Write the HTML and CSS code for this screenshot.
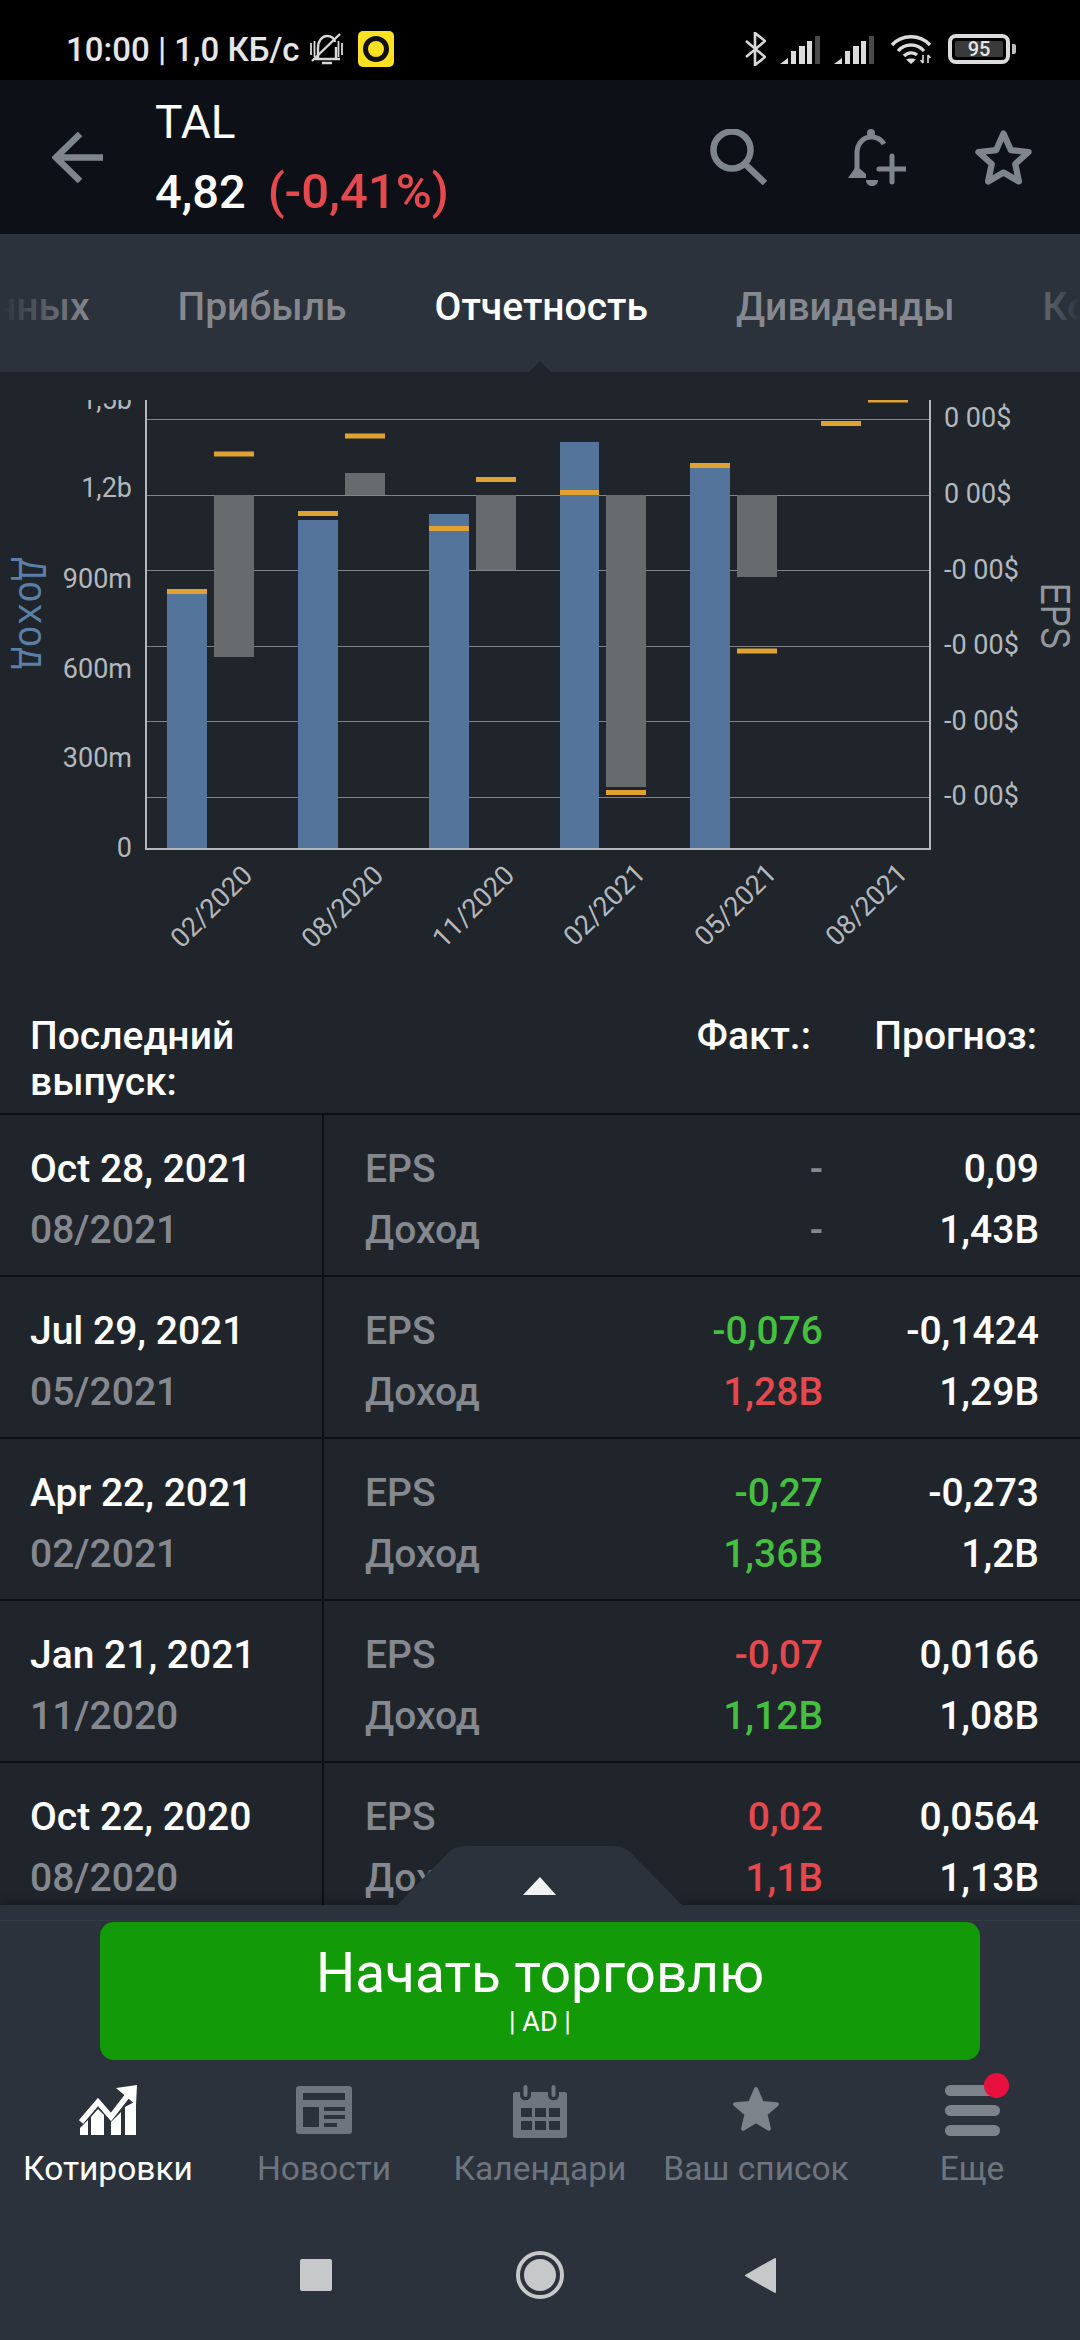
FILE: index.html
```html
<!DOCTYPE html>
<html lang="ru">
  <head>
    <meta charset="UTF-8" />
    <meta name="viewport" content="width=device-width, initial-scale=1.0" />
    <title>TAL</title>
    <link rel="stylesheet" href="styles.css">
  </head>
  <body>
    <div class="screen">
      <div class="status">
        <span class="status-text">10:00 | 1,0 КБ/с</span>
        <svg class="ic-mute" viewBox="0 0 35 33" fill="none" stroke="#d8d8d8" stroke-width="2.400">
          <path d="M9 25V15C9 8 13 3 18 3C22 3 25 5 26 9M27 14V25M6 26H31M13 30H23" />
          <path d="M3 28L31 1" />
          <path d="M2 10V22M5.500 8V24M29.500 8V24M33 10V22" stroke-width="1.800" />
        </svg>
        <span class="app-badge"><i></i></span>
        <span class="grow"></span>
        <svg class="ic-bt" viewBox="0 0 21 34" fill="none" stroke="#d8d8d8" stroke-width="2.6">
          <path d="M1 9L20 25L10 33V1L20 9L1 25" />
        </svg>
        <svg class="ic-signal" viewBox="0 0 40 29">
          <path fill="#dcdcdc" d="M0 29L8 23V29ZM11 16H16V29H11ZM19 11H25V29H19ZM27 6H32V29H27Z" />
          <rect fill="#4a4a4a" x="35" y="1" width="5" height="28" />
        </svg>
        <svg class="ic-signal" viewBox="0 0 40 29">
          <path fill="#dcdcdc" d="M0 29L8 23V29ZM11 16H16V29H11ZM19 11H25V29H19ZM27 6H32V29H27Z" />
          <rect fill="#4a4a4a" x="35" y="1" width="5" height="28" />
        </svg>
        <svg class="ic-wifi" viewBox="0 0 42 30" fill="none" stroke="#dcdcdc" stroke-width="3.4">
          <path d="M2 11C12 0 30 0 40 11" />
          <path d="M8 17C15 9 27 9 34 17" />
          <path d="M14 22C18 18 24 18 27 21" />
          <path fill="#dcdcdc" stroke="none" d="M21 30L16 25.500C18 24 24 24 26 25.500Z" />
          <path stroke-width="1.6" d="M33 21V29M30.500 26L33 29M38 21V29M38 21L40.500 24" />
        </svg>
        <span class="battery"><b>95</b></span>
        <span class="battery-nub"></span>
      </div>

      <div class="header">
        <svg class="ic-back" viewBox="0 0 51 51" fill="none" stroke="#7f858c" stroke-width="6.500">
          <path d="M51 25.500H4M28 2L4 25.500L28 49" />
        </svg>
        <div class="title">
          <div class="ticker">TAL</div>
          <div class="price">4,82<span class="red change">(-0,41%)</span></div>
        </div>
        <span class="grow"></span>
        <svg class="ic-search" viewBox="0 0 57 56" fill="none" stroke="#7f858c" stroke-width="6.500">
          <circle cx="22" cy="21" r="18.500" />
          <path d="M35 35L55 54" />
        </svg>
        <svg class="ic-bell" viewBox="0 0 58 58" fill="none" stroke="#7f858c" stroke-width="5">
          <circle cx="23" cy="5" r="4" fill="#7f858c" stroke="none" />
          <path d="M9 42V25C9 15 16 9 23 9C29 9 33 11 36 16" />
          <path fill="#7f858c" stroke="none" d="M0 50L7 40H11L18 46V50Z" />
          <path fill="#7f858c" stroke="none" d="M18 52H30C30 60 18 60 18 52Z" />
          <path d="M31 41H58M44 28V54" stroke-linecap="round" />
        </svg>
        <svg class="ic-star" viewBox="0 0 50 48" fill="none" stroke="#7f858c" stroke-width="5.500" stroke-linejoin="round">
          <path d="M25 3L31.400 17.500L47 19.200L35.300 29.700L38.500 45L25 37.200L11.500 45L14.700 29.700L3 19.200L18.600 17.500Z" />
        </svg>
      </div>

      <div class="tabs">
        <span class="tab tab-cut">нных</span>
        <span class="tab">Прибыль</span>
        <span class="tab active">Отчетность</span>
        <span class="tab">Дивиденды</span>
        <span class="tab">Ко</span>
        <span class="fade fade-left"></span>
        <span class="fade fade-right"></span>
        <span class="tab-arrow"></span>
      </div>

      <div class="main">
        <svg class="chart" viewBox="0 372 1080 620">
          <defs>
            <clipPath id="plot"><rect x="0" y="400" width="1080" height="592" /></clipPath>
          </defs>
          <g clip-path="url(#plot)">
            <g class="grid">
              <line x1="145" x2="930" y1="419.500" y2="419.500" />
              <line x1="145" x2="930" y1="495.500" y2="495.500" />
              <line x1="145" x2="930" y1="570.500" y2="570.500" />
              <line x1="145" x2="930" y1="646.500" y2="646.500" />
              <line x1="145" x2="930" y1="721.500" y2="721.500" />
              <line x1="145" x2="930" y1="797.500" y2="797.500" />
            </g>
            <g class="bar-blue">
              <rect x="167" y="590" width="40" height="259" />
              <rect x="298" y="520" width="40" height="329" />
              <rect x="429" y="514" width="40" height="335" />
              <rect x="560" y="442" width="39" height="407" />
              <rect x="690" y="466" width="40" height="383" />
            </g>
            <g class="bar-grey">
              <rect x="214" y="495" width="40" height="162" />
              <rect x="345" y="473" width="40" height="22" />
              <rect x="476" y="495" width="40" height="75" />
              <rect x="606" y="495" width="40" height="292" />
              <rect x="737" y="495" width="40" height="82" />
            </g>
            <g class="marker">
              <rect x="167" y="589" width="40" height="5" />
              <rect x="214" y="451.500" width="40" height="5" />
              <rect x="298" y="511" width="40" height="5" />
              <rect x="345" y="433.500" width="40" height="5" />
              <rect x="429" y="526" width="40" height="5" />
              <rect x="476" y="477" width="40" height="5" />
              <rect x="560" y="490" width="39" height="5" />
              <rect x="606" y="790" width="40" height="5" />
              <rect x="690" y="463" width="40" height="5" />
              <rect x="737" y="648.500" width="40" height="5" />
              <rect x="821" y="421" width="40" height="5" />
              <rect x="868" y="399" width="40" height="3.500" />
            </g>
            <g class="axis">
              <line x1="146" x2="146" y1="400" y2="850" />
              <line x1="930" x2="930" y1="400" y2="850" />
              <line x1="145" x2="931" y1="849" y2="849" />
            </g>
            <g class="tick tick-left">
              <text x="132" y="409">1,5b</text>
              <text x="132" y="497">1,2b</text>
              <text x="132" y="588">900m</text>
              <text x="132" y="678">600m</text>
              <text x="132" y="767">300m</text>
              <text x="132" y="857">0</text>
            </g>
            <g class="tick">
              <text x="944" y="427">0 00$</text>
              <text x="944" y="503">0 00$</text>
              <text x="944" y="579">-0 00$</text>
              <text x="944" y="654">-0 00$</text>
              <text x="944" y="730">-0 00$</text>
              <text x="944" y="805">-0 00$</text>
            </g>
            <g class="tick tick-x">
              <text x="254" y="877" transform="rotate(-45 254 877)">02/2020</text>
              <text x="385" y="877" transform="rotate(-45 385 877)">08/2020</text>
              <text x="516" y="877" transform="rotate(-45 516 877)">11/2020</text>
              <text x="647" y="875" transform="rotate(-45 647 875)">02/2021</text>
              <text x="778" y="875" transform="rotate(-45 778 875)">05/2021</text>
              <text x="909" y="875" transform="rotate(-45 909 875)">08/2021</text>
            </g>
            <text class="axis-title-left" x="0" y="0" transform="translate(19 558) rotate(90)" textLength="112" lengthAdjust="spacingAndGlyphs">Доход</text>
            <text class="axis-title-right" x="0" y="0" transform="translate(1041 583) rotate(90)" textLength="66" lengthAdjust="spacingAndGlyphs">EPS</text>
          </g>
        </svg>

        <div class="list-head">
          <div class="head-first">Последний<br />выпуск:</div>
          <div class="head-fact">Факт.:</div>
          <div class="head-fc">Прогноз:</div>
        </div>

        <div class="row">
          <div class="date"><div>Oct 28, 2021</div><div class="grey">08/2021</div></div>
          <div class="vals">
            <span class="grey">EPS</span><span class="num grey">-</span><span class="num">0,09</span>
            <span class="grey">Доход</span><span class="num grey">-</span><span class="num">1,43B</span>
          </div>
        </div>
        <div class="row">
          <div class="date"><div>Jul 29, 2021</div><div class="grey">05/2021</div></div>
          <div class="vals">
            <span class="grey">EPS</span><span class="num green">-0,076</span><span class="num">-0,1424</span>
            <span class="grey">Доход</span><span class="num red">1,28B</span><span class="num">1,29B</span>
          </div>
        </div>
        <div class="row">
          <div class="date"><div>Apr 22, 2021</div><div class="grey">02/2021</div></div>
          <div class="vals">
            <span class="grey">EPS</span><span class="num green">-0,27</span><span class="num">-0,273</span>
            <span class="grey">Доход</span><span class="num green">1,36B</span><span class="num">1,2B</span>
          </div>
        </div>
        <div class="row">
          <div class="date"><div>Jan 21, 2021</div><div class="grey">11/2020</div></div>
          <div class="vals">
            <span class="grey">EPS</span><span class="num red">-0,07</span><span class="num">0,0166</span>
            <span class="grey">Доход</span><span class="num green">1,12B</span><span class="num">1,08B</span>
          </div>
        </div>
        <div class="row">
          <div class="date"><div>Oct 22, 2020</div><div class="grey">08/2020</div></div>
          <div class="vals">
            <span class="grey">EPS</span><span class="num red">0,02</span><span class="num">0,0564</span>
            <span class="grey">Доход</span><span class="num red">1,1B</span><span class="num">1,13B</span>
          </div>
        </div>
      </div>

      <div class="dock">
        <svg class="pull" viewBox="0 0 285 59">
          <path fill="#2b323b" d="M0 59L48 10C54 3 60 0 70 0H215C225 0 231 3 237 10L285 59Z" />
          <path fill="#f2f2f2" d="M143 31L159 49H126Z" />
        </svg>
        <div class="ad-line">
          <div class="ad">
            <div class="ad-main">Начать торговлю</div>
            <div class="ad-sub">| AD |</div>
          </div>
        </div>
        <div class="nav">
          <div class="nav-item active">
            <svg class="nav-ic" viewBox="0 0 58 54" width="58" height="54" fill="#fff">
              <path d="M1 51V44L9 36V51ZM12 51V33L19 25L25 31V51ZM32 51V38L42 28V51ZM46 51V23L57 17V51Z" />
              <path d="M2 38L19 18L32 33L49 11" fill="none" stroke="#fff" stroke-width="5.500" />
              <path d="M37 4L58 1L57 21Z" />
            </svg>
            <span>Котировки</span>
          </div>
          <div class="nav-item">
            <svg class="nav-ic" viewBox="0 0 56 54" width="56" height="54">
              <path fill="#6f757e" fill-rule="evenodd" d="M3 2H53Q56 2 56 5V47Q56 50 53 50H3Q0 50 0 47V5Q0 2 3 2ZM7 9V16H49V9ZM7 23V43H23V23ZM28 23V27H49V23ZM28 31V35H49V31ZM28 39V43H41V39Z" />
            </svg>
            <span>Новости</span>
          </div>
          <div class="nav-item">
            <svg class="nav-ic" viewBox="0 0 54 54" width="54" height="54">
              <path fill="#6f757e" fill-rule="evenodd" d="M2 8H7V11C7 18 18 18 18 11V8H35V11C35 18 46 18 46 11V8H52Q54 8 54 10V52Q54 54 52 54H2Q0 54 0 52V10Q0 8 2 8ZM8 24V33H19V24ZM22 24V33H33V24ZM36 24V33H47V24ZM8 37V46H19V37ZM22 37V46H33V37ZM36 37V46H47V37Z" />
              <path fill="none" stroke="#6f757e" stroke-width="4" stroke-linecap="round" d="M12.500 3V11M40.500 3V11" />
            </svg>
            <span>Календари</span>
          </div>
          <div class="nav-item">
            <svg class="nav-ic" viewBox="0 0 50 54" width="50" height="54">
              <path fill="#7d838a" stroke="#7d838a" stroke-width="4" stroke-linejoin="round" d="M25 5L30.900 18.900L45.900 20.200L34.500 30.100L37.900 44.800L25 37L12.100 44.800L15.500 30.100L4.100 20.200L19.100 18.900Z" />
            </svg>
            <span>Ваш список</span>
          </div>
          <div class="nav-item">
            <div class="menu-ic">
              <i></i><i></i><i></i>
              <b class="dot"></b>
            </div>
            <span>Еще</span>
          </div>
        </div>
        <div class="sysnav">
          <span class="sys-square"></span>
          <span class="sys-circle"><i></i></span>
          <svg class="sys-back" viewBox="0 0 31 35">
            <path fill="#c6c8ca" stroke="#c6c8ca" stroke-width="2" stroke-linejoin="round" d="M30 1V34L1 17.500Z" />
          </svg>
        </div>
      </div>
    </div>
  </body>
</html>
```

FILE: styles.css
```css
* {
  padding: 0;
  margin: 0;
  box-sizing: border-box;
}
html,
body {
  background: #000;
}
body {
  font-family: Roboto, "Noto Sans", sans-serif;
  color: #fff;
}
svg {
  display: block;
  flex-shrink: 0;
}
.screen {
  width: 1080px;
  height: 2340px;
  display: flex;
  flex-direction: column;
  overflow: hidden;
  position: relative;
}
.grow {
  flex: 1;
}
.red {
  color: #e5484d;
}
.green {
  color: #45bf3f;
}
.grey {
  color: #85898f;
}

/* status bar */
.status {
  height: 80px;
  background: #000;
  display: flex;
  align-items: center;
  padding-left: 66px;
  padding-top: 18px;
  flex-shrink: 0;
}
.status-text {
  font-size: 33px;
  font-weight: 500;
  color: #e6e6e6;
  white-space: nowrap;
}
.ic-mute {
  width: 35px;
  height: 33px;
  margin-left: 9px;
}
.app-badge {
  width: 36px;
  height: 36px;
  margin-left: 14px;
  background: #fce022;
  border-radius: 5px;
  display: flex;
  align-items: center;
  justify-content: center;
}
.app-badge i {
  width: 26px;
  height: 26px;
  border: 5px solid #111;
  border-radius: 50%;
}
.ic-bt {
  width: 21px;
  height: 34px;
}
.ic-signal {
  width: 40px;
  height: 29px;
  margin-left: 14px;
}
.ic-wifi {
  width: 42px;
  height: 30px;
  margin-left: 16px;
}
.battery {
  width: 62px;
  height: 30px;
  margin-left: 16px;
  border: 4px solid #dcdcdc;
  border-radius: 8px;
  display: flex;
  align-items: center;
  justify-content: center;
  padding: 3px;
}
.battery b {
  flex: 1;
  height: 100%;
  background: #3a3a3a;
  border-radius: 2px;
  font-size: 20px;
  font-weight: 500;
  line-height: 16px;
  text-align: center;
  color: #e6e6e6;
}
.battery-nub {
  width: 4px;
  height: 10px;
  margin-left: 2px;
  margin-right: 64px;
  background: #bdbdbd;
  border-radius: 0 2px 2px 0;
}

/* header */
.header {
  height: 154px;
  background: #0d1117;
  display: flex;
  align-items: center;
  padding-left: 52px;
  padding-right: 48px;
  flex-shrink: 0;
}
.ic-back {
  width: 51px;
  height: 51px;
}
.title {
  margin-left: 52px;
}
.ticker {
  font-size: 46px;
  line-height: 70px;
}
.price {
  font-size: 47px;
  line-height: 70px;
  font-weight: 500;
  white-space: pre;
}
.change {
  font-size: 49px;
  margin-left: 22px;
}
.ic-search {
  width: 57px;
  height: 56px;
}
.ic-bell {
  width: 58px;
  height: 58px;
  margin-left: 81px;
}
.ic-star {
  width: 57px;
  height: 55px;
  margin-left: 69px;
}

/* tabs */
.tabs {
  height: 138px;
  background: #2b323b;
  display: flex;
  align-items: center;
  gap: 88px;
  padding-top: 8px;
  overflow: hidden;
  position: relative;
  flex-shrink: 0;
}
.tab {
  font-size: 39px;
  font-weight: 500;
  color: #85898f;
  white-space: nowrap;
}
.tab-cut {
  margin-left: -6px;
}
.tab.active {
  color: #fff;
}
.fade {
  position: absolute;
  top: 0;
  bottom: 0;
  width: 90px;
}
.fade-left {
  left: 0;
  background: linear-gradient(to right, #2b323b, rgba(43, 50, 59, 0));
}
.fade-right {
  right: 0;
  width: 60px;
  background: linear-gradient(to left, #2b323b, rgba(43, 50, 59, 0));
}
.tab-arrow {
  position: absolute;
  left: 529px;
  bottom: 0;
  border-left: 11px solid transparent;
  border-right: 11px solid transparent;
  border-bottom: 11px solid #1f252b;
}

/* chart */
.main {
  flex: 1;
  min-height: 0;
  background: #1f252b;
  overflow: hidden;
}
.chart {
  width: 1080px;
  height: 620px;
}
.grid line {
  stroke: #7f858b;
  stroke-width: 1;
}
.axis line {
  stroke: #b3b8be;
  stroke-width: 2;
}
.bar-blue rect {
  fill: #54749b;
}
.bar-grey rect {
  fill: #686b6e;
}
.marker rect {
  fill: #e0a331;
}
.tick text {
  font-family: Roboto, sans-serif;
  font-size: 27px;
  fill: #b4b8bd;
}
.tick-left text,
.tick-x text {
  text-anchor: end;
}
.axis-title-left {
  font-family: "Liberation Mono", monospace;
  font-size: 40px;
  fill: #5c7fa8;
}
.axis-title-right {
  font-family: "Liberation Sans", sans-serif;
  font-size: 42px;
  fill: #92979c;
}

/* table */
.list-head {
  display: grid;
  grid-template-columns: 1fr 200px 226px;
  padding: 21px 43px 8px 30px;
  font-size: 39px;
  font-weight: 500;
  line-height: 46px;
  border-bottom: 2px solid #0e1013;
}
.head-fact {
  text-align: right;
  white-space: nowrap;
}
.head-fc {
  text-align: right;
  white-space: nowrap;
}
.row {
  display: grid;
  grid-template-columns: 324px 1fr;
  height: 162px;
  border-bottom: 2px solid #0e1013;
  font-size: 39px;
  font-weight: 500;
  line-height: 61px;
}
.date {
  padding: 24px 0 0 30px;
  border-right: 2px solid #0e1013;
}
.vals {
  display: grid;
  grid-template-columns: 1fr 170px 216px;
  grid-auto-rows: 61px;
  padding: 24px 41px 0 41px;
}
.num {
  text-align: right;
}

/* bottom dock */
.dock {
  height: 435px;
  padding-top: 15px;
  background: #2b323b;
  position: relative;
  flex-shrink: 0;
  box-shadow: 0 -3px 8px rgba(0, 0, 0, 0.25);
}
.pull {
  position: absolute;
  left: 397px;
  top: -59px;
  width: 285px;
  height: 59px;
}
.ad-line {
  padding-top: 1px;
  border-top: 1px solid #343b45;
}
.ad {
  width: 880px;
  height: 138px;
  margin: 0 auto;
  background: #129a09;
  border-radius: 14px;
  text-align: center;
  padding-top: 19px;
}
.ad-main {
  font-size: 55px;
  line-height: 64px;
}
.ad-sub {
  font-size: 27px;
  line-height: 28px;
  margin-top: 3px;
}
.nav {
  display: grid;
  grid-template-columns: repeat(5, 216px);
  margin-top: 24px;
}
.nav-item {
  display: flex;
  flex-direction: column;
  align-items: center;
  font-size: 33.500px;
  line-height: 40px;
  color: #6f757e;
  white-space: nowrap;
}
.nav-item.active {
  color: #fff;
}
.nav-ic {
  height: 54px;
  margin-bottom: 11px;
}
.menu-ic {
  width: 55px;
  height: 54px;
  margin-bottom: 11px;
  padding-top: 1px;
  display: flex;
  flex-direction: column;
  gap: 9px;
  position: relative;
}
.menu-ic i {
  height: 11px;
  background: #7d838a;
  border-radius: 6px;
}
.dot {
  position: absolute;
  right: -9px;
  top: -11px;
  width: 25px;
  height: 25px;
  border-radius: 50%;
  background: #e8103f;
}
.sysnav {
  position: absolute;
  left: 0;
  right: 0;
  bottom: 47px;
  height: 36px;
  display: flex;
  align-items: center;
  padding-left: 300px;
}
.sys-square {
  width: 32px;
  height: 32px;
  background: #c6c8ca;
  border-radius: 2px;
}
.sys-circle {
  width: 48px;
  height: 48px;
  margin-left: 184px;
  border: 4px solid #c6c8ca;
  border-radius: 50%;
  display: flex;
  align-items: center;
  justify-content: center;
}
.sys-circle i {
  width: 32px;
  height: 32px;
  background: #c6c8ca;
  border-radius: 50%;
}
.sys-back {
  width: 31px;
  height: 35px;
  margin-left: 181px;
}
```
